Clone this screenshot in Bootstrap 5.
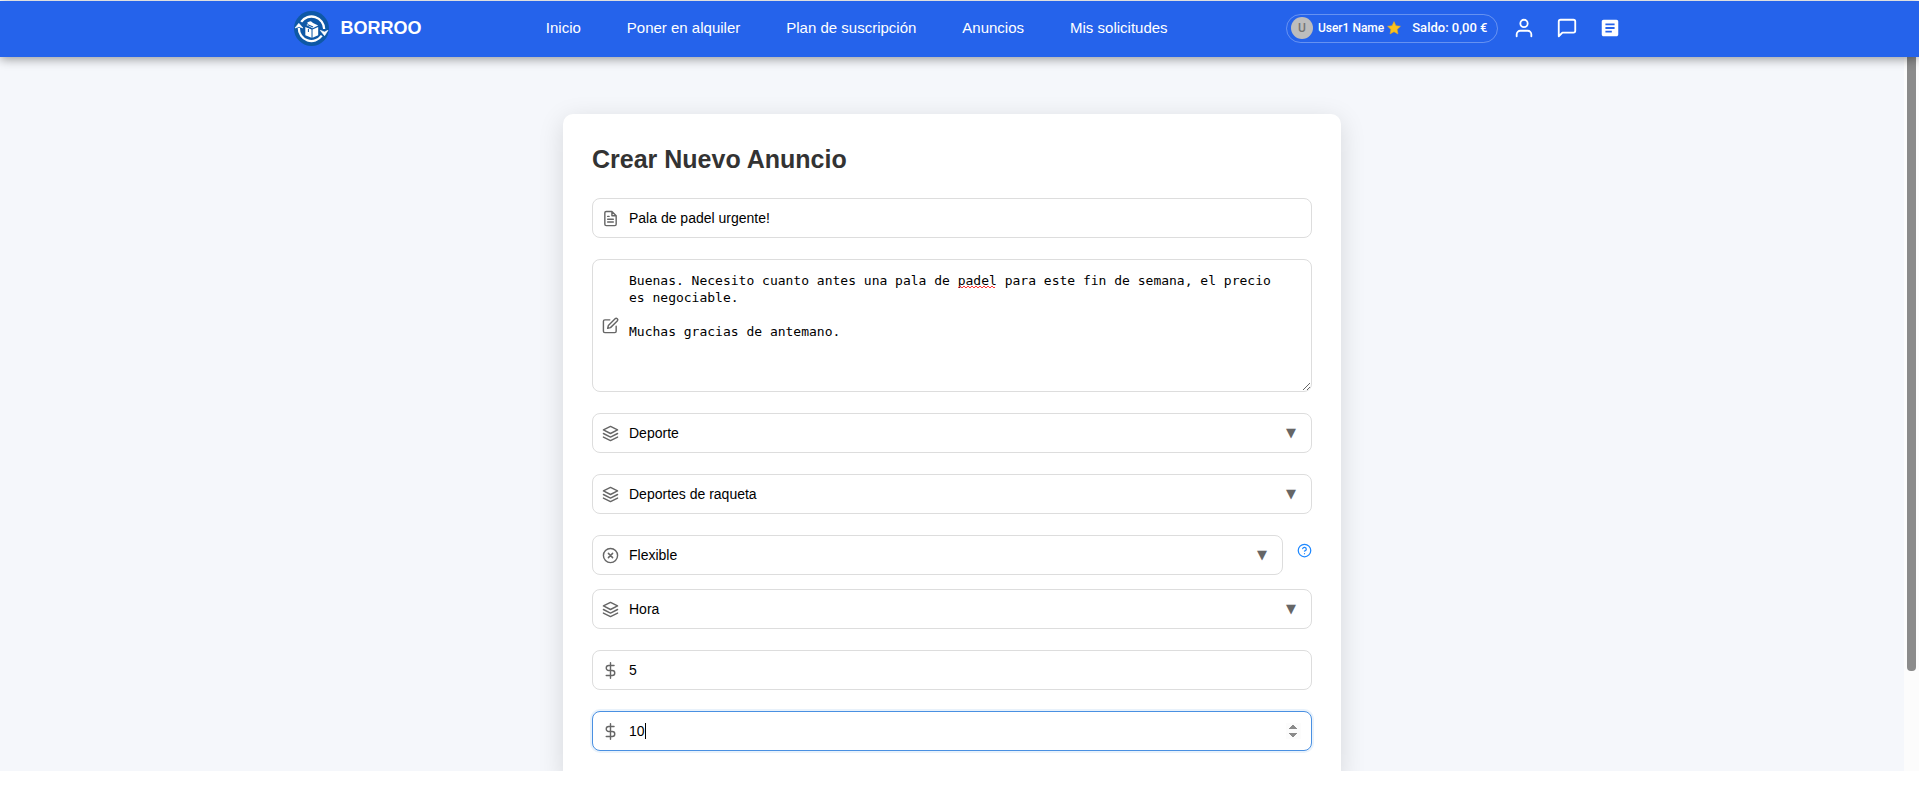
<!DOCTYPE html>
<html lang="es">
<head>
<meta charset="utf-8">
<meta name="viewport" content="width=device-width, initial-scale=1">
<title>Borroo - Crear Nuevo Anuncio</title>
<link href="https://cdn.jsdelivr.net/npm/bootstrap@5.3.0/dist/css/bootstrap.min.css" rel="stylesheet">
<style>
  body { font-family: "Liberation Sans", Arial, sans-serif; font-size: 14px; background: #fff; }
  .page-shell { height: 100vh; padding: 1px 0 21px; }

  .top-bar { background: #2563eb; height: 56px; box-shadow: 0 2px 10px rgba(0,0,0,.4); z-index: 5; }
  .top-inner { max-width: 1340px; padding: 0 9px 2px 4px; }
  .brand-name { font-size: 18px; font-weight: 700; }
  .top-links { gap: 46px; font-size: 15px; padding-left: 6px; }
  .top-bar a { color: #fff; text-decoration: none; }
  .top-icons { gap: 21px; }
  .user-pill { height: 29px; padding: 0 9px 0 4px; margin-right: -6px; border: 1px solid rgba(255,255,255,.3); font-family: Roboto, sans-serif; font-weight: 500; color: #fff; }
  .user-avatar { width: 22px; height: 22px; background: #bdbdbd; color: #757575; font-size: 12px; margin-right: 5px; }
  .user-name { font-size: 12px; margin-right: 3px; }
  .user-balance { font-size: 13px; margin-left: 11px; }

  .page-body { background: #f5f7fb; min-height: 0; }
  .form-card { max-width: 778px; margin: 57px auto 0; padding: 29px; background: #fff; border-radius: 10px; box-shadow: 0 6px 26px rgba(0,0,0,.13); }
  .form-title { font-size: 25px; line-height: 32px; font-weight: 700; color: #333; margin-bottom: 23px; }
  .field-list { gap: 21px; }
  .field-pair { gap: 14px; }
  .field-icon { left: 10px; color: #666; pointer-events: none; }
  .field-box { height: 40px; padding: 0 10px 0 36px; font-size: 14px; color: #000; background-color: #fff; background-image: none; border: 1px solid #ddd; border-radius: 8px; }
  .field-box:focus { border-color: #4a90e2; box-shadow: 0 0 0 2px rgba(74,144,226,.12); color: #000; }
  .field-area { height: 133px; padding: 12px 28px 12px 36px; font-family: "DejaVu Sans Mono", monospace; font-size: 13px; line-height: 17px; resize: vertical; display: block; }
  .field-arrow { right: 16px; font-family: "DejaVu Sans", sans-serif; font-size: 13px; color: #666; pointer-events: none; }
  .spell-line { font-family: "DejaVu Sans Mono", monospace; font-size: 13px; left: calc(37px + 42ch); top: 26px; pointer-events: none; }
  .plain-number::-webkit-inner-spin-button { -webkit-appearance: none; }
  .step-number { caret-color: transparent; }
  .step-number::-webkit-inner-spin-button { opacity: 1; }
  .text-caret { left: calc(37px + 2ch); width: 1px; height: 16px; background: #000; visibility: hidden; pointer-events: none; }
  .step-number:focus + .text-caret { visibility: visible; }
  .help-btn { color: #1e88ff; margin-top: 8px; line-height: 0; }

  .scroll-track { width: 15px; background: #fcfcfc; padding: 0 3px; }
  .scroll-thumb { height: 86%; background: #8b8b8b; border-radius: 0 0 4px 4px; }
</style>
</head>
<body>
<svg class="d-none" aria-hidden="true">
  <symbol id="i-layers" viewBox="0 0 24 24"><path d="M12 2 2 7l10 5 10-5zM2 17l10 5 10-5M2 12l10 5 10-5"/></symbol>
  <symbol id="i-dollar" viewBox="0 0 24 24"><path d="M12 1v22M17 5H9.500a3.500 3.500 0 0 0 0 7h5a3.500 3.500 0 0 1 0 7H6"/></symbol>
</svg>

<div class="page-shell d-flex flex-column overflow-hidden">
  <header class="top-bar position-relative flex-shrink-0">
    <div class="top-inner h-100 mx-auto d-flex align-items-center justify-content-between">
      <a href="#" class="d-flex align-items-center gap-2">
        <svg width="35" height="35" viewBox="0 0 34 34" aria-hidden="true">
          <circle cx="17" cy="17" r="17" fill="#0e58a6"/>
          <g fill="none" stroke="#fff" stroke-width="2.200">
            <path d="M7 10.500A12.300 12.300 0 0 1 29.300 17.500"/>
            <path d="M4.700 16.500A12.300 12.300 0 0 0 27 24"/>
          </g>
          <path d="M1 16.500 4.700 12 8.700 16.500 4.900 15.300zM25.500 18.800 29.700 24 33 18.800 29.500 20.300z" fill="#fff" stroke="#fff" stroke-width=".6"/>
          <path d="M11 15.500 17 18v8l-6-2.500zM18 18l5.500-2.500v8L18 26zM12 13.500l5-2.500 6.500 3-5.500 2.800zM13 11l3-1 2 1-4.500 2z" fill="#fff"/>
          <path d="m13.500 13.300 5 2.200M14 17.500v3" stroke="#0e58a6" fill="none"/>
        </svg>
        <span class="brand-name ms-1">BORROO</span>
      </a>
      <nav class="top-links d-flex">
        <a href="#">Inicio</a>
        <a href="#">Poner en alquiler</a>
        <a href="#">Plan de suscripción</a>
        <a href="#">Anuncios</a>
        <a href="#">Mis solicitudes</a>
      </nav>
      <div class="d-flex align-items-center top-icons">
        <div class="user-pill rounded-pill d-flex align-items-center">
          <span class="user-avatar rounded-circle d-flex align-items-center justify-content-center">U</span>
          <span class="user-name">User1 Name</span>
          <svg width="14" height="14" viewBox="0 0 24 24" aria-hidden="true"><path d="m12 1 3.300 7.200 7.700.9-5.700 5.300 1.500 7.800L12 18.300l-6.800 3.900 1.500-7.800L1 9.100l7.700-.9z" fill="#fcc21b" stroke="#e9a820"/></svg>
          <span class="user-balance">Saldo: 0,00 €</span>
        </div>
        <a href="#" aria-label="Perfil" class="d-flex"><svg width="22" height="22" viewBox="0 0 24 24" fill="none" stroke="currentColor" stroke-width="2" stroke-linecap="round" stroke-linejoin="round"><path d="M20 21v-2a4 4 0 0 0-4-4H8a4 4 0 0 0-4 4v2"/><circle cx="12" cy="7" r="4"/></svg></a>
        <a href="#" aria-label="Mensajes" class="d-flex"><svg width="22" height="22" viewBox="0 0 24 24" fill="none" stroke="currentColor" stroke-width="2" stroke-linecap="round" stroke-linejoin="round"><path d="M21 15a2 2 0 0 1-2 2H7l-4 4V5a2 2 0 0 1 2-2h14a2 2 0 0 1 2 2z"/></svg></a>
        <a href="#" aria-label="Solicitudes" class="d-flex"><svg width="22" height="22" viewBox="0 0 24 24" fill="currentColor"><path d="M19 3H5c-1.100 0-2 .9-2 2v14c0 1.100.9 2 2 2h14c1.100 0 2-.9 2-2V5c0-1.100-.9-2-2-2zm-5 14H7v-2h7v2zm3-4H7v-2h10v2zm0-4H7V7h10v2z"/></svg></a>
      </div>
    </div>
  </header>

  <div class="page-body flex-fill d-flex overflow-hidden">
    <main class="flex-fill">
      <form class="form-card">
        <h1 class="form-title">Crear Nuevo Anuncio</h1>
        <div class="field-list d-flex flex-column">
          <div class="position-relative d-flex align-items-center">
            <svg class="field-icon position-absolute" width="17" height="17" viewBox="0 0 24 24" fill="none" stroke="currentColor" stroke-width="2" stroke-linecap="round" stroke-linejoin="round"><path d="M14 2H6a2 2 0 0 0-2 2v16a2 2 0 0 0 2 2h12a2 2 0 0 0 2-2V8zM14 2v6h6M16 13H8M16 17H8M10 9H8"/></svg>
            <input type="text" class="form-control field-box" aria-label="Título" value="Pala de padel urgente!">
          </div>
          <div class="position-relative d-flex align-items-center">
            <svg class="field-icon position-absolute" width="17" height="17" viewBox="0 0 24 24" fill="none" stroke="currentColor" stroke-width="2" stroke-linecap="round" stroke-linejoin="round"><path d="M11 4H4a2 2 0 0 0-2 2v14a2 2 0 0 0 2 2h14a2 2 0 0 0 2-2v-7"/><path d="M18.500 2.500a2.100 2.100 0 0 1 3 3L12 15l-4 1 1-4z"/></svg>
            <textarea class="form-control field-box field-area" aria-label="Descripción" spellcheck="false">Buenas. Necesito cuanto antes una pala de padel para este fin de semana, el precio es negociable.

Muchas gracias de antemano.</textarea>
            <svg class="spell-line position-absolute" width="39" height="4" viewBox="0 0 39 4" fill="none" stroke="#f33" aria-hidden="true"><path d="M0 3l2-2 2 2 2-2 2 2 2-2 2 2 2-2 2 2 2-2 2 2 2-2 2 2 2-2 2 2 2-2 2 2 2-2 2 2 1-1"/></svg>
          </div>
          <div class="position-relative d-flex align-items-center">
            <svg class="field-icon position-absolute" width="17" height="17" fill="none" stroke="currentColor" stroke-width="2" stroke-linecap="round" stroke-linejoin="round"><use href="#i-layers"/></svg>
            <select class="form-select field-box" aria-label="Categoría"><option>Deporte</option></select>
            <span class="field-arrow position-absolute">▼</span>
          </div>
          <div class="position-relative d-flex align-items-center">
            <svg class="field-icon position-absolute" width="17" height="17" fill="none" stroke="currentColor" stroke-width="2" stroke-linecap="round" stroke-linejoin="round"><use href="#i-layers"/></svg>
            <select class="form-select field-box" aria-label="Subcategoría"><option>Deportes de raqueta</option></select>
            <span class="field-arrow position-absolute">▼</span>
          </div>
          <div class="field-pair d-flex flex-column">
            <div class="field-pair d-flex align-items-start">
              <div class="position-relative d-flex align-items-center flex-fill">
                <svg class="field-icon position-absolute" width="17" height="17" viewBox="0 0 24 24" fill="none" stroke="currentColor" stroke-width="2" stroke-linecap="round" stroke-linejoin="round"><circle cx="12" cy="12" r="10"/><path d="m15 9-6 6M9 9l6 6"/></svg>
                <select class="form-select field-box" aria-label="Política de cancelación"><option>Flexible</option></select>
                <span class="field-arrow position-absolute">▼</span>
              </div>
              <button type="button" class="help-btn btn p-0 border-0" aria-label="Ayuda"><svg width="15" height="15" viewBox="0 0 24 24" fill="none" stroke="currentColor" stroke-width="2" stroke-linecap="round" stroke-linejoin="round"><circle cx="12" cy="12" r="10"/><path d="M9.100 9a3 3 0 0 1 5.800 1c0 2-3 3-3 3M12 17h.01"/></svg></button>
            </div>
            <div class="position-relative d-flex align-items-center">
              <svg class="field-icon position-absolute" width="17" height="17" fill="none" stroke="currentColor" stroke-width="2" stroke-linecap="round" stroke-linejoin="round"><use href="#i-layers"/></svg>
              <select class="form-select field-box" aria-label="Unidad de tiempo"><option>Hora</option></select>
              <span class="field-arrow position-absolute">▼</span>
            </div>
          </div>
          <div class="position-relative d-flex align-items-center">
            <svg class="field-icon position-absolute" width="17" height="17" fill="none" stroke="currentColor" stroke-width="2" stroke-linecap="round" stroke-linejoin="round"><use href="#i-dollar"/></svg>
            <input type="number" class="form-control field-box plain-number" aria-label="Precio" value="5">
          </div>
          <div class="position-relative d-flex align-items-center">
            <svg class="field-icon position-absolute" width="17" height="17" fill="none" stroke="currentColor" stroke-width="2" stroke-linecap="round" stroke-linejoin="round"><use href="#i-dollar"/></svg>
            <input type="number" class="form-control field-box step-number" aria-label="Fianza" value="10" autofocus>
            <span class="text-caret position-absolute" aria-hidden="true"></span>
          </div>
        </div>
      </form>
    </main>
    <div class="scroll-track flex-shrink-0" aria-hidden="true"><div class="scroll-thumb"></div></div>
  </div>
</div>
<script src="https://cdn.jsdelivr.net/npm/bootstrap@5.3.0/dist/js/bootstrap.bundle.min.js"></script>
</body>
</html>
